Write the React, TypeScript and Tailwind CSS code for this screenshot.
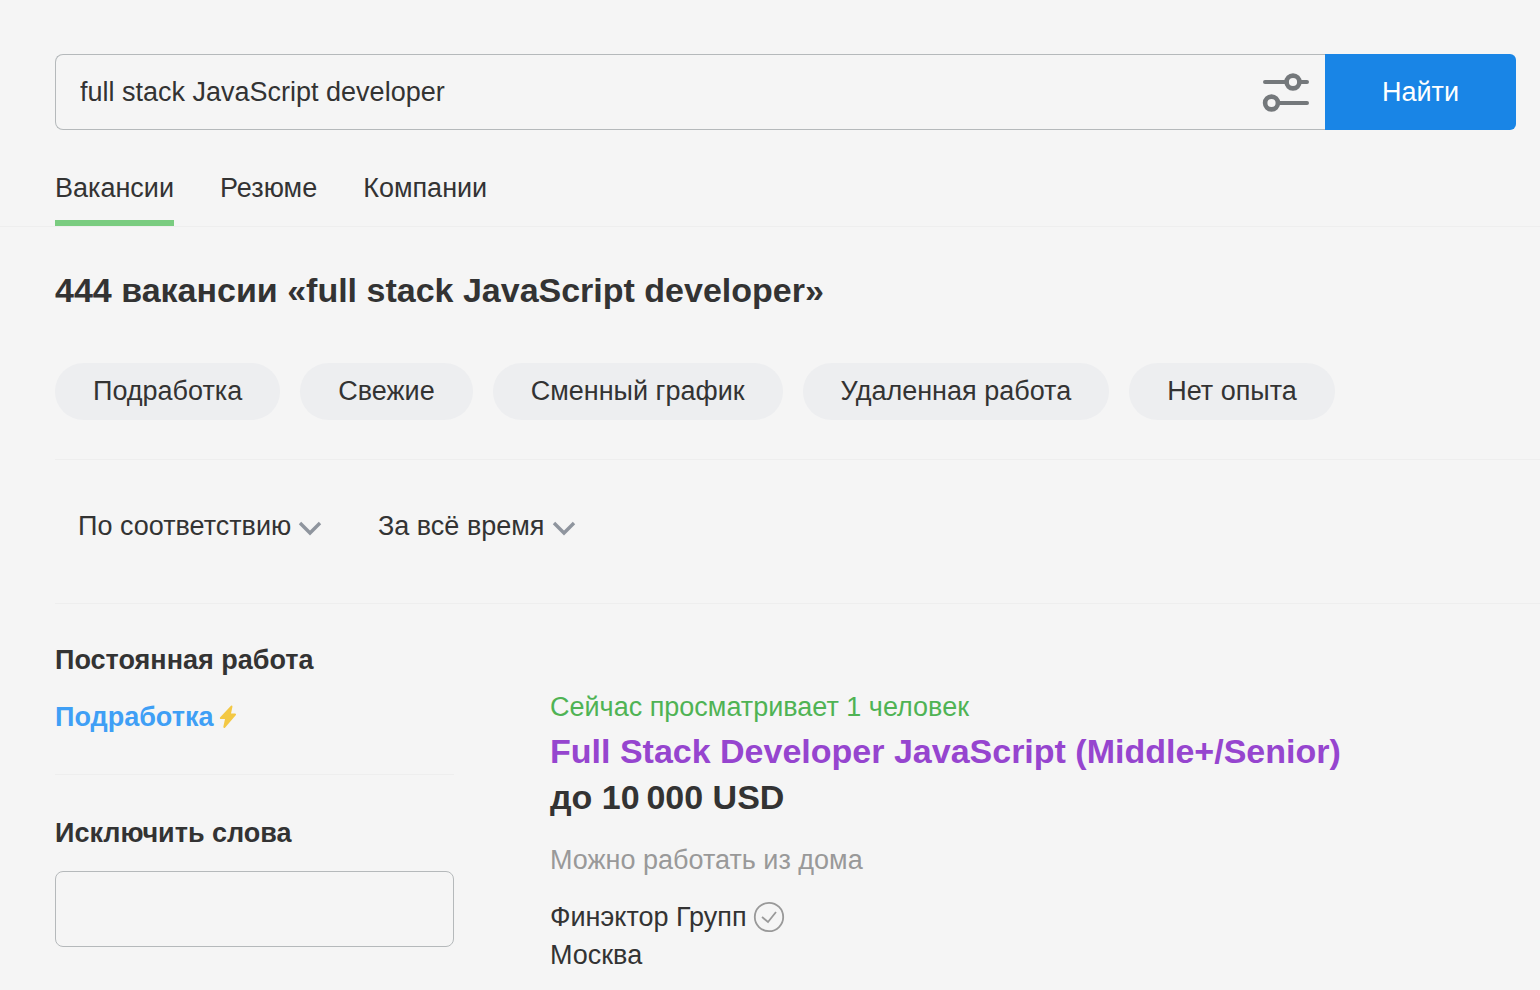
import React from 'react';

const tabs = ['Резюме', 'Компании'];

const chips = ['Подработка', 'Свежие', 'Сменный график', 'Удаленная работа', 'Нет опыта'];

const ChevronIcon = () => (
  <svg className="pointer-events-none -ml-6 h-6 w-6 shrink-0" viewBox="0 0 24 24" fill="none" stroke="#8f959e" strokeWidth="3.4" aria-hidden="true">
    <path d="M2 8l10 10L22 8" />
  </svg>
);

const FiltersIcon = () => (
  <svg className="h-10 w-12" viewBox="0 0 48 40" fill="none" stroke="#74787b" strokeWidth="4" strokeLinecap="round" aria-hidden="true">
    <path d="M3 10h21M39 10h6M18 31h27" />
    <g strokeWidth="4.6">
      <circle cx="31" cy="10" r="6.4" />
      <circle cx="9.5" cy="31" r="6.4" />
    </g>
  </svg>
);

const SearchBar = () => (
  <form className="flex h-[76px] pl-[55px] pr-6" onSubmit={(e) => e.preventDefault()}>
    <div className="flex min-w-0 flex-1 items-center rounded-l-lg border border-r-0 border-[#b5b9bb] pl-6 pr-[15px]">
      <input
        type="text"
        aria-label="Поиск"
        defaultValue="full stack JavaScript developer"
        className="min-w-0 flex-1 bg-transparent text-[27px] outline-none"
      />
      <button type="button" aria-label="Фильтры">
        <FiltersIcon />
      </button>
    </div>
    <button type="submit" className="w-[191px] rounded-r-md bg-[#1985e6] text-[27px] text-white">
      Найти
    </button>
  </form>
);

const Tabs = () => (
  <nav className="mt-9 flex gap-[46px] border-b border-[#eeeeee] pl-[55px] text-[27px] leading-[44px]">
    <a href="#vacancies" className="border-b-6 border-[#7acc80] pb-[10px]">Вакансии</a>
    {tabs.map((tab) => (
      <a key={tab} href="#">{tab}</a>
    ))}
  </nav>
);

const SortSelect = ({ label, width }: { label: string; width: string }) => (
  <div className="flex items-center">
    <select aria-label={label} className={`${width} appearance-none bg-transparent outline-none`}>
      <option>{label}</option>
    </select>
    <ChevronIcon />
  </div>
);

const Sidebar = () => (
  <aside className="w-[399px] shrink-0 pt-[39px] font-bold">
    <h2 className="leading-[34px]">Постоянная работа</h2>
    <a href="#part-time" className="mt-[23px] flex items-center gap-1.5 leading-[34px] text-[#3f9ff5]">
      Подработка
      <svg className="h-6 w-[18px]" viewBox="0 0 18 24" fill="#f3c844" aria-hidden="true">
        <path d="M11.5 1.2c1-1.2 2.2-.6 1.9.8L12 8.5h4c1 0 1.4 1 .7 1.8L6.2 22.4c-.9 1-2.1.5-1.8-.8L6 14H2c-1.100 0-1.500-1-.8-1.800z" />
      </svg>
    </a>
    <hr className="mt-10 border-[#eeeeee]" />
    <label htmlFor="exclude" className="mt-[41px] block leading-[34px]">Исключить слова</label>
    <input id="exclude" type="text" className="mt-[21px] block h-[76px] w-full rounded-lg border border-[#b5b9bb] bg-transparent px-6 outline-none" />
  </aside>
);

const Vacancy = () => (
  <article className="min-w-0 flex-1 pt-[83px]">
    <p className="leading-[41px] text-[#4fb354]">Сейчас просматривает 1 человек</p>
    <h2 className="text-[34px] leading-[46px] font-bold text-[#9645cf]">
      <a href="#vacancy">Full Stack Developer JavaScript (Middle+/Senior)</a>
    </h2>
    <p className="text-[34px] leading-[46px] font-bold">до 10{'\u2009'}000 USD</p>
    <p className="mt-5 leading-10 text-[#999999]">Можно работать из дома</p>
    <p className="mt-[18px] flex items-center gap-1.5 leading-[38px]">
      Финэктор Групп
      <svg className="h-8 w-8" viewBox="0 0 32 32" fill="none" stroke="#999" strokeWidth="1.8" aria-hidden="true">
        <circle cx="16" cy="16" r="14.2" />
        <path d="M9 16l6 5 8-10" />
      </svg>
    </p>
    <p className="leading-[38px]">Москва</p>
  </article>
);

const App = () => {
  return (
    <div className="min-h-screen bg-[#f5f5f5] pt-[54px] font-['Liberation_Sans',sans-serif] text-[27px] text-[#333333]">
      <SearchBar />
      <Tabs />
      <main className="pl-[55px]">
        <h1 className="mt-10 text-[34px] leading-[46px] font-bold">444 вакансии «full stack JavaScript developer»</h1>
        <div className="mt-[50px] flex flex-wrap gap-5">
          {chips.map((chip) => (
            <button key={chip} className="h-[57px] rounded-full bg-[#edeef0] px-[38px]">{chip}</button>
          ))}
        </div>
        <div className="mt-[39px] flex h-[145px] items-center gap-14 border-y border-[#eeeeee] pb-[10px] pl-[23px]">
          <SortSelect label="По соответствию" width="w-[244px]" />
          <SortSelect label="За всё время" width="w-[198px]" />
        </div>
        <div className="flex gap-24">
          <Sidebar />
          <Vacancy />
        </div>
      </main>
    </div>
  );
};

export default App;
